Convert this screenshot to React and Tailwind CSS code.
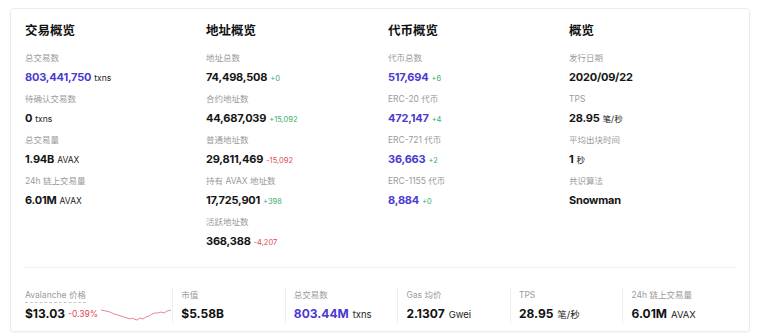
import React from "react";

const font = { fontFamily: 'Inter, "Noto Sans CJK SC", sans-serif' };

const columns = [
  {
    title: "交易概览",
    rows: [
      { label: "总交易数", value: "803,441,750", unit: "txns", purple: true },
      { label: "待确认交易数", value: "0", unit: "txns" },
      { label: "总交易量", value: "1.94B", unit: "AVAX" },
      { label: "24h 链上交易量", value: "6.01M", unit: "AVAX" },
    ],
  },
  {
    title: "地址概览",
    rows: [
      { label: "地址总数", value: "74,498,508", delta: "+0" },
      { label: "合约地址数", value: "44,687,039", delta: "+15,092" },
      { label: "普通地址数", value: "29,811,469", delta: "-15,092" },
      { label: "持有 AVAX 地址数", value: "17,725,901", delta: "+398" },
      { label: "活跃地址数", value: "368,388", delta: "-4,207" },
    ],
  },
  {
    title: "代币概览",
    rows: [
      { label: "代币总数", value: "517,694", delta: "+6", purple: true },
      { label: "ERC-20 代币", value: "472,147", delta: "+4", purple: true },
      { label: "ERC-721 代币", value: "36,663", delta: "+2", purple: true },
      { label: "ERC-1155 代币", value: "8,884", delta: "+0", purple: true },
    ],
  },
  {
    title: "概览",
    rows: [
      { label: "发行日期", value: "2020/09/22" },
      { label: "TPS", value: "28.95", unit: "笔/秒" },
      { label: "平均出块时间", value: "1", unit: "秒" },
      { label: "共识算法", value: "Snowman" },
    ],
  },
];

const stats = [
  { label: "市值", value: "$5.58B" },
  { label: "总交易数", value: "803.44M", unit: "txns", purple: true },
  { label: "Gas 均价", value: "2.1307", unit: "Gwei" },
  { label: "TPS", value: "28.95", unit: "笔/秒" },
  { label: "24h 链上交易量", value: "6.01M", unit: "AVAX" },
];

function Row({ row }) {
  return (
    <div className="mb-[6px]">
      <p className="h-[14px] text-[8.5px] leading-[14px] text-[#9a9a9a]">{row.label}</p>
      <p className="mt-[3px] flex h-[18px] items-baseline leading-[18px]">
        <span
          className={`text-[11px] font-bold tracking-[-0.2px] ${
            row.purple ? "text-[#4a3bd0]" : "text-[#151515]"
          }`}
        >
          {row.value}
        </span>
        {row.unit && <span className="ml-[3px] text-[8.5px] text-[#222]">{row.unit}</span>}
        {row.delta && (
          <span
            className={`ml-[3px] text-[7.5px] ${
              row.delta.startsWith("-") ? "text-[#e04a55]" : "text-[#3aab6e]"
            }`}
          >
            {row.delta}
          </span>
        )}
      </p>
    </div>
  );
}

export default function App() {
  return (
    <div className="h-[336px] w-[760px] bg-white pl-[10px] pt-[8px]" style={font}>
      <div className="h-[324px] w-[740px] rounded-[4px] border border-[#ececec] px-[14px] pt-[12px] shadow-[0_1px_3px_rgba(0,0,0,0.04)]">
        <div className="grid grid-cols-[181px_182px_181px_1fr]">
          {columns.map((col) => (
            <div key={col.title}>
              <h2 className="mb-[10px] h-[20px] text-[12.5px] font-bold leading-[20px] text-[#111]">
                {col.title}
              </h2>
              {col.rows.map((row) => (
                <Row key={row.label} row={row} />
              ))}
            </div>
          ))}
        </div>

        <div className="mt-[11px] h-px w-[711px] bg-[#efefef]" />

        <div className="mt-[20px] flex">
          <div className="w-[148px]">
            <p className="h-[14px] text-[8.5px] leading-[14px] text-[#9a9a9a]">
              <span className="border-b border-dashed border-[#c8c8c8] pb-[2px]">Avalanche 价格</span>
            </p>
            <div className="mt-[3px] flex h-[18px] items-center">
              <span className="text-[12px] font-bold text-[#111]">$13.03</span>
              <span className="ml-[3px] text-[8.5px] text-[#e04a55]">-0.39%</span>
              <svg width="70" height="14" viewBox="0 0 70 14" className="ml-[3px]">
                <polyline
                  fill="none"
                  stroke="#e07a84"
                  strokeWidth="0.9"
                  points="0,3 5,4 9,5 13,7 17,8 20,9 23,10 26,11 29,12 31,11 33,12 36,13 39,11 42,12 45,10 48,9 51,7 54,6 57,6 60,5 63,6 66,4 70,3"
                />
              </svg>
            </div>
          </div>
          {stats.map((s) => (
            <div key={s.label} className="w-[113px] border-l border-[#eeeeee] pl-[8px]">
              <p className="h-[14px] text-[8.5px] leading-[14px] text-[#9a9a9a]">{s.label}</p>
              <p className="mt-[3px] flex h-[18px] items-baseline leading-[18px]">
                <span
                  className={`text-[12px] font-bold ${s.purple ? "text-[#4a3bd0]" : "text-[#111]"}`}
                >
                  {s.value}
                </span>
                {s.unit && <span className="ml-[4px] text-[9.5px] text-[#222]">{s.unit}</span>}
              </p>
            </div>
          ))}
        </div>
      </div>
    </div>
  );
}
